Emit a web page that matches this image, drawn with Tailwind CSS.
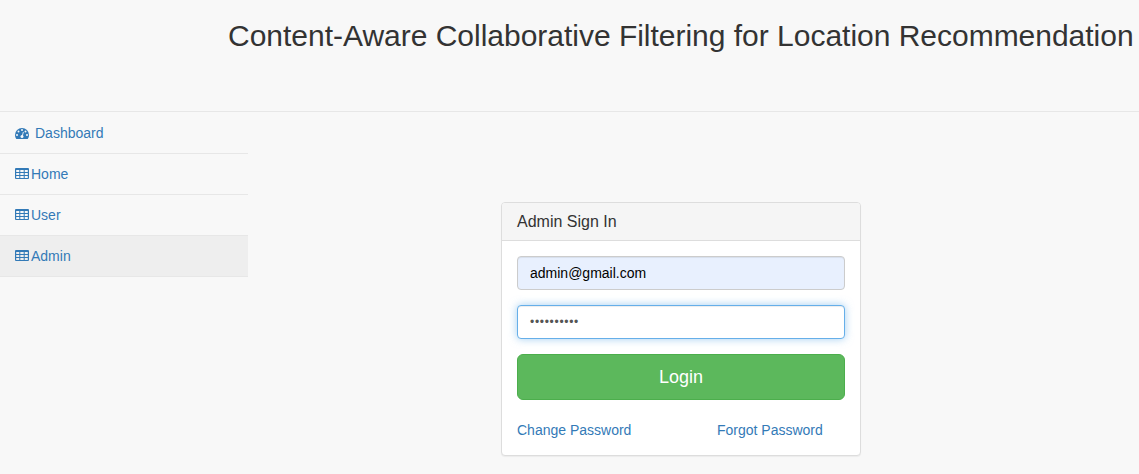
<!DOCTYPE html>
<html lang="en">
<head>
<meta charset="utf-8">
<title>Admin Sign In</title>
<script src="https://cdn.jsdelivr.net/npm/@tailwindcss/browser@4"></script>
</head>
<body class="bg-[#f8f8f8] font-['Liberation_Sans',sans-serif] text-[14px] leading-5 text-[#333] h-[474px] overflow-hidden">
<svg class="hidden">
  <symbol id="table" viewBox="0 0 14 11"><path fill="currentColor" fill-rule="evenodd" d="M1 0H13Q14 0 14 1V10Q14 11 13 11H1Q0 11 0 10V1Q0 0 1 0ZM1.200 2V4H4.300V2ZM5.300 2V4H8.700V2ZM9.700 2V4H12.800V2ZM1.200 5V7H4.300V5ZM5.300 5V7H8.700V5ZM9.700 5V7H12.800V5ZM1.200 8V10H4.300V8ZM5.300 8V10H8.700V8ZM9.700 8V10H12.800V8Z"/></symbol>
</svg>
<header class="h-[112px] border-b border-[#e7e7e7] pl-[228px] pt-[18px]">
  <h1 class="text-[30px] leading-[36px] tracking-[-0.015px] whitespace-nowrap">Content-Aware Collaborative Filtering for Location Recommendation</h1>
</header>
<div class="flex items-start">
  <nav class="w-[248px] text-[#337ab7]">
    <a class="flex items-center h-[42px] pl-[15px] border-b border-[#e7e7e7]"><svg class="w-[14px] h-[11px] mt-px mr-[6px]" viewBox="0 0 14 11"><path fill="currentColor" d="M7 0A7 7 0 0 1 14 7Q14 9.200 12.900 10.800Q12.700 11 12.400 11H1.600Q1.300 11 1.100 10.800Q0 9.200 0 7A7 7 0 0 1 7 0Z"/><g fill="#f8f8f8"><circle cx="2" cy="7" r="1"/><circle cx="3.500" cy="3.500" r="1"/><circle cx="7" cy="2" r="1"/><circle cx="10.500" cy="3.500" r="1"/><circle cx="12" cy="7" r="1"/><circle cx="7" cy="8.500" r="1.500"/></g><path d="M7.200 8.200 8.300 4.300" stroke="#f8f8f8" stroke-width=".9" stroke-linecap="round"/></svg>Dashboard</a>
    <a class="flex items-center h-[41px] pl-[15px] border-b border-[#e7e7e7]"><svg class="w-[14px] h-[11px] -mt-px mr-[2px]"><use href="#table"/></svg>Home</a>
    <a class="flex items-center h-[41px] pl-[15px] border-b border-[#e7e7e7]"><svg class="w-[14px] h-[11px] -mt-px mr-[2px]"><use href="#table"/></svg>User</a>
    <a class="flex items-center h-[41px] pl-[15px] border-b border-[#e7e7e7] bg-[#eee]"><svg class="w-[14px] h-[11px] -mt-px mr-[2px]"><use href="#table"/></svg>Admin</a>
  </nav>
  <main class="ml-[253px] mt-[90px] w-[360px] h-[254px] rounded border border-[#ddd] bg-white shadow-[0_1px_1px_rgba(0,0,0,.05)]">
    <h2 class="h-[38px] rounded-t-[3px] bg-[#f5f5f5] border-b border-[#ddd] px-[15px] pt-[10px] text-[16px] leading-[17px]">Admin Sign In</h2>
    <form class="p-[15px]">
      <div class="h-[34px] rounded border border-[#ccc] bg-[#e8f0fe] px-3 py-[6px] text-black shadow-[inset_0_1px_1px_rgba(0,0,0,.075)]">admin@gmail.com</div>
      <div class="mt-[15px] h-[34px] rounded border border-[#66afe9] bg-white px-3 flex items-center shadow-[inset_0_1px_1px_rgba(0,0,0,.075),0_0_8px_rgba(102,175,233,.6)] text-[#555] text-[12px] tracking-[0.7px]">••••••••••</div>
      <div class="mt-[15px] h-[46px] rounded-md border border-[#4cae4c] bg-[#5cb85c] text-white text-[18px] leading-[44px] text-center">Login</div>
      <div class="mt-[20px] flex text-[#337ab7]"><a class="w-[200px]">Change Password</a><a>Forgot Password</a></div>
    </form>
  </main>
</div>
</body>
</html>
